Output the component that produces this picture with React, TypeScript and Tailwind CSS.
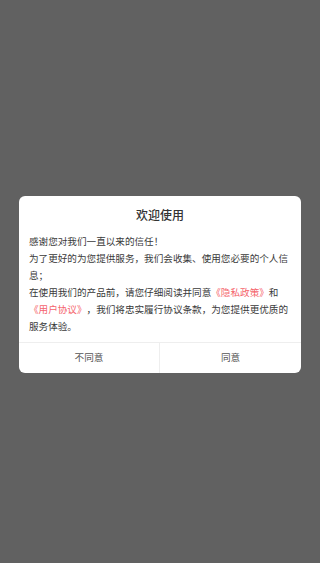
export default function App() {
  return (
    <div
      className="min-h-[563px] w-full bg-[#616161] px-[19px] pt-[196px]"
      style={{ fontFamily: '"Noto Sans CJK SC", "Noto Sans", sans-serif' }}
    >
      <div className="overflow-hidden rounded-[6px] bg-white">
        <div className="pt-[10px] text-center text-[12px] leading-[17px] font-medium text-[#333]">
          欢迎使用
        </div>
        <div className="mt-[9.5px] px-[10px] pb-[7px] text-[9.6px] leading-[17px] text-[#3a3a3a] [text-spacing-trim:space-all]">
          <p>感谢您对我们一直以来的信任！</p>
          <p>为了更好的为您提供服务，我们会收集、使用您必要的个人信息；</p>
          <p>
            在使用我们的产品前，请您仔细阅读并同意<span className="whitespace-nowrap text-[#f5656d]">《隐私政策》</span>和<br />
            <span className="text-[#f5656d]">《用户协议》</span>，我们将忠实履行协议条款，为您提供更优质的服务体验。
          </p>
        </div>
        <div className="grid h-[31px] grid-cols-2 border-t border-[#eeeeee]">
          <button className="flex items-center justify-center border-r border-[#eeeeee] text-[9.6px] text-[#555]">
            不同意
          </button>
          <button className="flex items-center justify-center text-[9.6px] text-[#555]">
            同意
          </button>
        </div>
      </div>
    </div>
  );
}
